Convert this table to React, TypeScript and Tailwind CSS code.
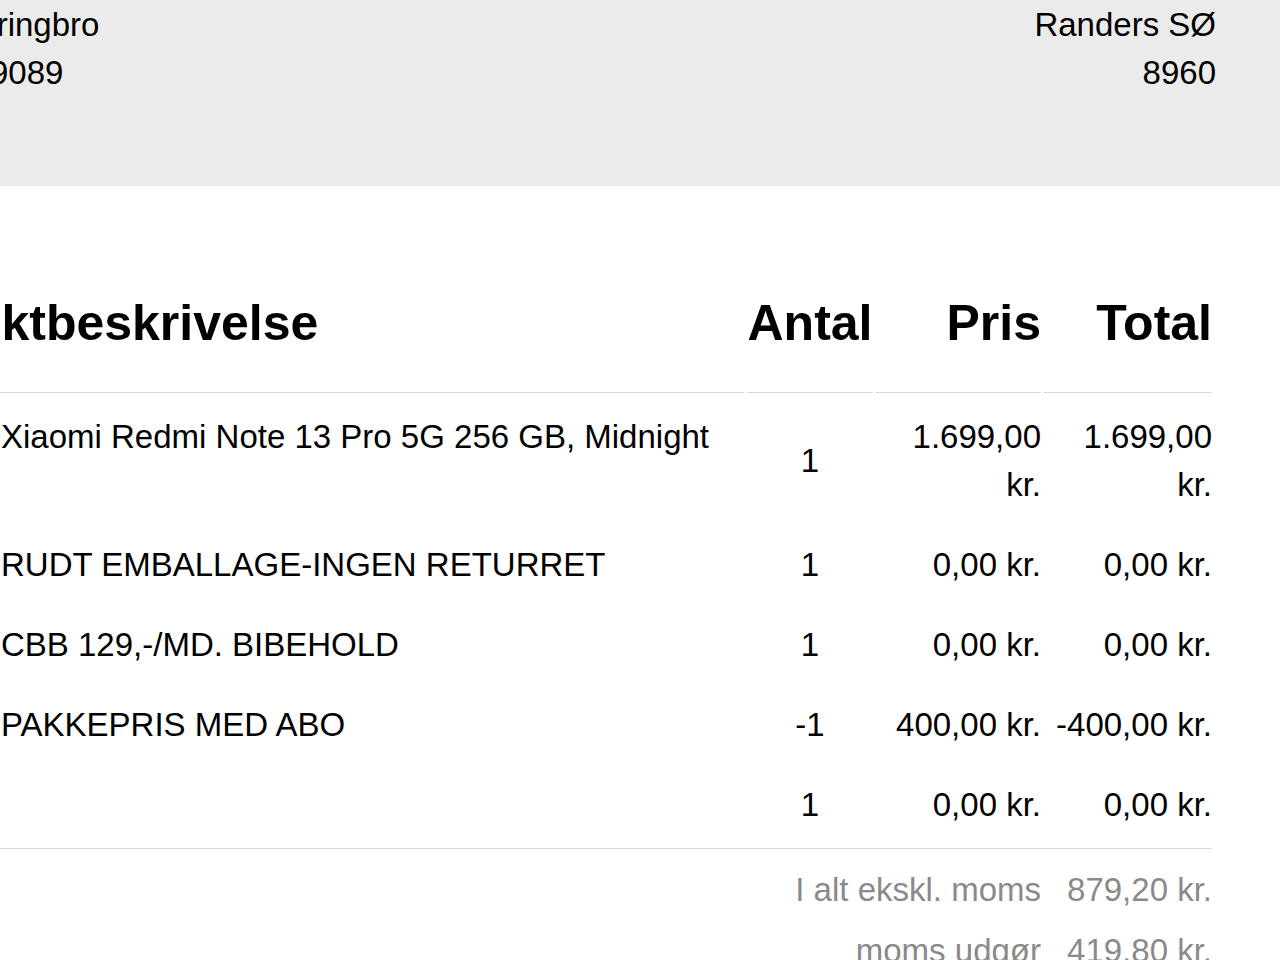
type Line = {
  id: number;
  text: string;
  qty: string;
  price: string;
  total: string;
};

const lines: Line[] = [
  { id: 1, text: "Xiaomi Redmi Note 13 Pro 5G 256 GB, Midnight", qty: "1", price: "1.699,00 kr.", total: "1.699,00 kr." },
  { id: 2, text: "RUDT EMBALLAGE-INGEN RETURRET", qty: "1", price: "0,00 kr.", total: "0,00 kr." },
  { id: 3, text: "CBB 129,-/MD. BIBEHOLD", qty: "1", price: "0,00 kr.", total: "0,00 kr." },
  { id: 4, text: "PAKKEPRIS MED ABO", qty: "-1", price: "400,00 kr.", total: "-400,00 kr." },
  { id: 5, text: "", qty: "1", price: "0,00 kr.", total: "0,00 kr." },
];

const totals = [
  { label: "I alt ekskl. moms", value: "879,20 kr." },
  { label: "moms udgør", value: "419,80 kr." },
];

export default function App() {
  return (
    <main className="w-[1280px] h-[960px] overflow-hidden bg-white text-black font-['Liberation_Sans',Arial,sans-serif]">

      {/* Addresses */}

      <div className="h-[186px] bg-[#ebebeb] flex justify-between pr-[64px] pt-[1px] text-[33px] leading-[48px]">

        <div className="flex flex-col">
          <span className="-ml-[62px] whitespace-nowrap">Bjerringbro</span>
          <span className="-ml-[10px]">9089</span>
        </div>

        <div className="flex flex-col items-end">
          <span>Randers SØ</span>
          <span>8960</span>
        </div>

      </div>

      {/* Lines */}

      <div className="w-[1212px] mt-[109px]">

        <div className="flex gap-[3px] text-[50px] leading-[56px] font-bold">
          <div className="flex-1 border-b border-[#d6d6d6] pb-[41px] overflow-hidden">
            <span className="block -ml-[143px] whitespace-nowrap">Produktbeskrivelse</span>
          </div>
          <div className="w-[126px] border-b border-[#d6d6d6] pb-[41px] text-center">Antal</div>
          <div className="w-[165px] border-b border-[#d6d6d6] pb-[41px] text-right">Pris</div>
          <div className="w-[168px] border-b border-[#d6d6d6] pb-[41px] text-right">Total</div>
        </div>

        <div className="mt-[5px] flex flex-col gap-[2px] text-[33px] leading-[48px]">
          {lines.map((line) => (
            <div key={line.id} className="flex gap-[3px] py-[15px]">
              <div className="flex-1 pl-[1px]">{line.text}</div>
              <div className="w-[126px] text-center flex items-center justify-center">{line.qty}</div>
              <div className="w-[165px] text-right">{line.price}</div>
              <div className="w-[168px] text-right">{line.total}</div>
            </div>
          ))}
        </div>

        <div className="mt-[4px] border-t border-[#d6d6d6] pt-[10px] text-[33px] leading-[48px] text-[#8a8a8a]">
          {totals.map((row) => (
            <div key={row.label} className="flex gap-[3px] h-[61px] items-center">
              <div className="flex-1 text-right">{row.label}</div>
              <div className="w-[168px] text-right">{row.value}</div>
            </div>
          ))}
        </div>

      </div>

    </main>
  );
}
